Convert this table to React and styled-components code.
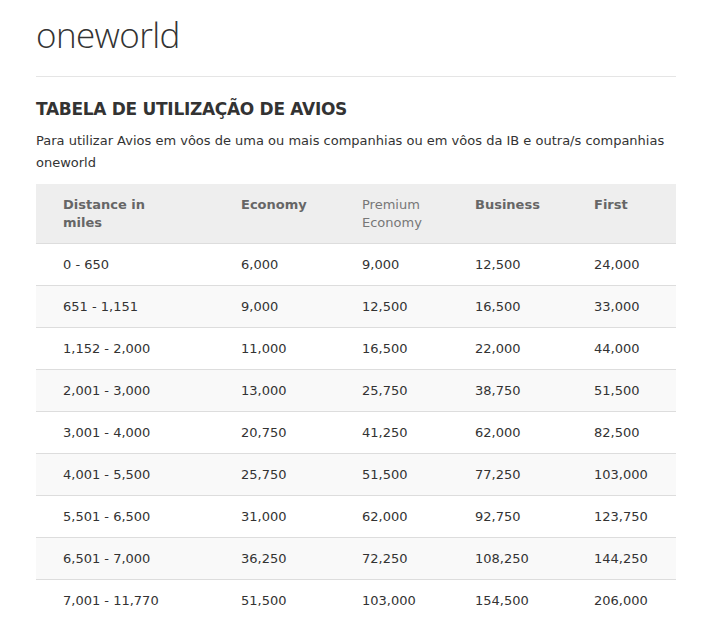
import React from 'react';
import styled, { createGlobalStyle } from 'styled-components';

const GlobalStyle = createGlobalStyle`
  html, body {
    margin: 0;
    padding: 0;
    background: #fff;
  }
  body {
    font-family: Verdana, "DejaVu Sans", sans-serif;
    color: #333;
  }
`;

const Page = styled.div`
  width: 640px;
  padding: 14px 36px 0;
`;

const Brand = styled.div`
  font-family: "Open Sans", sans-serif;
  font-weight: 300;
  font-size: 35px;
  line-height: 42px;
  color: #333;
  letter-spacing: -0.6px;
  padding-bottom: 20px;
  border-bottom: 1px solid #e5e5e5;
`;

const Heading = styled.h2`
  margin: 20px 0 0;
  font-size: 17px;
  line-height: 24px;
  font-weight: bold;
  letter-spacing: -0.3px;
  color: #333;
`;

const Intro = styled.p`
  margin: 9px 0 0;
  font-size: 13px;
  line-height: 22px;
`;

const Table = styled.table`
  margin-top: 10px;
  width: 640px;
  border-collapse: collapse;
  table-layout: fixed;
  font-size: 13px;
`;

const HeadCell = styled.th`
  background: #eee;
  text-align: left;
  vertical-align: top;
  padding: 12px 27px 11px 27px;
  line-height: 18px;
  color: ${(p) => (p.$light ? '#777' : '#666')};
  font-weight: ${(p) => (p.$light ? 'normal' : 'bold')};
  border-bottom: 1px solid #ddd;
  white-space: ${(p) => (p.$single ? 'nowrap' : 'normal')};
`;

const Row = styled.tr`
  background: ${(p) => (p.$shaded ? '#f9f9f9' : '#fff')};

  &:not(:last-child) td {
    border-bottom: 1px solid #ddd;
  }
`;

const Cell = styled.td`
  height: 41px;
  padding: 0 10px 0 27px;
  line-height: 18px;
  color: #333;
`;

const columns = [
  { label: 'Distance in miles', width: 178 },
  { label: 'Economy', width: 121, single: true },
  { label: 'Premium Economy', width: 113, light: true },
  { label: 'Business', width: 119, single: true },
  { label: 'First', width: 109, single: true },
];

const rows = [
  ['0 - 650', '6,000', '9,000', '12,500', '24,000'],
  ['651 - 1,151', '9,000', '12,500', '16,500', '33,000'],
  ['1,152 - 2,000', '11,000', '16,500', '22,000', '44,000'],
  ['2,001 - 3,000', '13,000', '25,750', '38,750', '51,500'],
  ['3,001 - 4,000', '20,750', '41,250', '62,000', '82,500'],
  ['4,001 - 5,500', '25,750', '51,500', '77,250', '103,000'],
  ['5,501 - 6,500', '31,000', '62,000', '92,750', '123,750'],
  ['6,501 - 7,000', '36,250', '72,250', '108,250', '144,250'],
  ['7,001 - 11,770', '51,500', '103,000', '154,500', '206,000'],
];

export default function App() {
  return (
    <>
      <GlobalStyle />
      <Page>
        <Brand>oneworld</Brand>
        <Heading>TABELA DE UTILIZAÇÃO DE AVIOS</Heading>
        <Intro>
          Para utilizar Avios em vôos de uma ou mais companhias ou em vôos da IB e
          outra/s companhias oneworld
        </Intro>
        <Table>
          <colgroup>
            {columns.map((c) => (
              <col key={c.label} style={{ width: c.width }} />
            ))}
          </colgroup>
          <thead>
            <tr>
              {columns.map((c) => (
                <HeadCell key={c.label} $light={c.light} $single={c.single}>
                  {c.label}
                </HeadCell>
              ))}
            </tr>
          </thead>
          <tbody>
            {rows.map((r, i) => (
              <Row key={r[0]} $shaded={i % 2 === 1}>
                {r.map((v, j) => (
                  <Cell key={j}>{v}</Cell>
                ))}
              </Row>
            ))}
          </tbody>
        </Table>
      </Page>
    </>
  );
}
